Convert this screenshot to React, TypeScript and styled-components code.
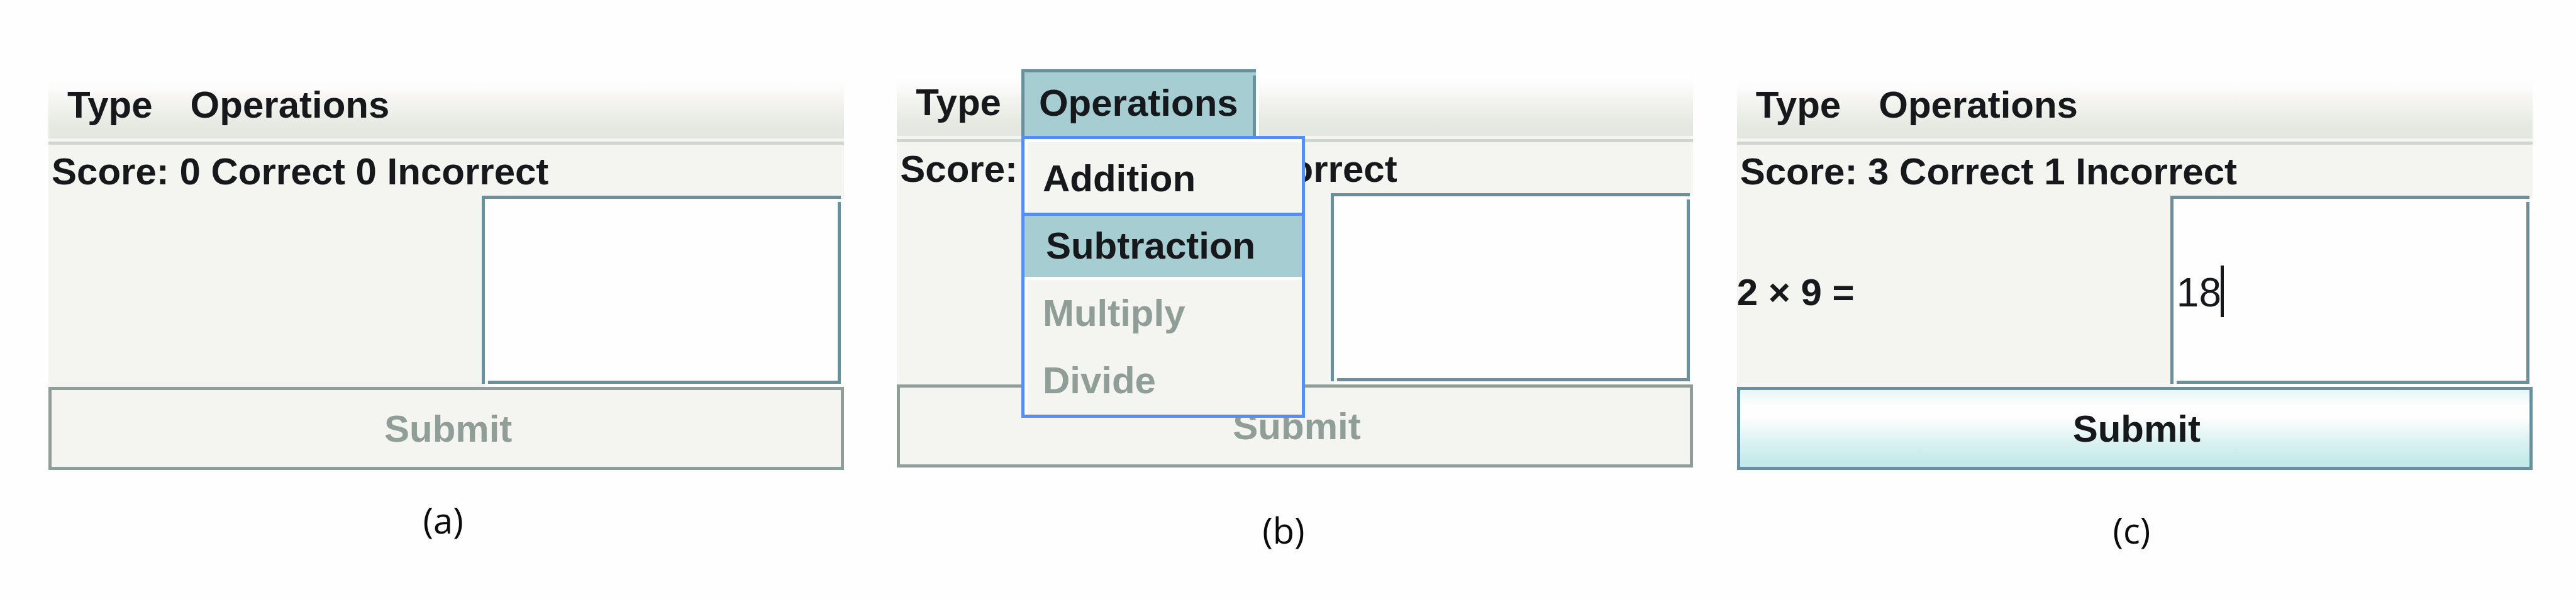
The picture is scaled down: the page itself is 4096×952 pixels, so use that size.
import React from "react";
import styled, { createGlobalStyle, css } from "styled-components";

const ink = "#17181c";
const panel = "#f4f4f0";
const paper = "#fefefe";
const steel = "#6a909e";
const teal = "#a5cdd2";
const muted = "#8f9e98";
const blue = "#568ef3";
const sans = `"Liberation Sans", Arial, sans-serif`;

const GlobalStyle = createGlobalStyle`
  *, *::before, *::after { box-sizing: border-box; }
  body { margin: 0; background: ${paper}; color: ${ink}; }
  button, input { font: inherit; color: inherit; margin: 0; border: 0; border-radius: 0; }
`;

const Page = styled.main`
  display: flex;
  align-items: flex-start;
  padding: 110px 69px 72px 77px;
`;

const Figure = styled.figure<{ $top?: number; $after?: number }>`
  flex: 1;
  min-width: 0;
  margin: 0 ${(p) => p.$after ?? 0}px 0 0;
  padding-top: ${(p) => p.$top ?? 0}px;
`;

const Caption = styled.figcaption<{ $gap: number; $inset: number }>`
  padding: ${(p) => p.$gap}px ${(p) => p.$inset}px 0 0;
  font: 56px/60px "Open Sans", "Noto Sans", sans-serif;
  color: #0a0a0a;
  text-align: center;
`;

const Applet = styled.form`
  display: flex;
  flex-direction: column;
  background: ${panel};
  font: bold 60px/70px ${sans};
`;

const MenuBar = styled.nav`
  display: flex;
  gap: 4px;
  height: 116px;
  padding: 0 0 5px 2px;
  border-bottom: 5px solid #cfd6cd;
  background: linear-gradient(
    #fefefe 12px,
    #fbfafa 30px,
    #f4f4f0 45px,
    #e4e8e0 92px,
    #e4e8e0 106px,
    ${panel} 106px
  );
`;

const MenuSlot = styled.div`
  position: relative;
  display: flex;
`;

const MenuButton = styled.button<{ $open?: boolean }>`
  padding: 0 28px;
  background: none;
  ${(p) =>
    p.$open &&
    css`
      padding: 0 28px 3px 23px;
      border-top: 5px solid ${steel};
      border-left: 5px solid ${steel};
      background: linear-gradient(${steel}, ${steel}) right 0 top 5px / 5px 100%
        no-repeat ${teal};
      box-shadow: 5px 0 0 ${paper};
    `}
`;

const Popup = styled.div`
  position: absolute;
  z-index: 1;
  top: 100%;
  left: 0;
  width: 451px;
  padding-top: 10px;
  border: 5px solid ${blue};
  background: ${panel};
  box-shadow: inset 5px 5px 0 ${paper};
`;

const PopupItem = styled.button<{ $selected?: boolean }>`
  display: block;
  width: 100%;
  height: 107px;
  padding: 0 29px 2px;
  background: none;
  text-align: left;
  &:disabled {
    color: ${muted};
  }
  ${(p) =>
    p.$selected &&
    css`
      padding: 0 34px 2px;
      border-top: 5px solid ${blue};
      border-bottom: 5px solid ${paper};
      background: ${teal};
    `}
`;

const Score = styled.p`
  margin: 0;
  padding: 8px 5px 3px;
`;

const Question = styled.div`
  display: grid;
  grid-template-columns: 689fr 576fr;
  height: 304px;
`;

const Expression = styled.label`
  align-self: center;
  padding-top: 4px;
`;

const AnswerBox = styled.div`
  position: relative;
  display: flex;
  align-items: center;
`;

const line = `linear-gradient(${steel}, ${steel})`;
const notch = `linear-gradient(${panel}, ${panel})`;

/* An etched field: the sides stop short of the top-right and bottom-left corners. */
const Answer = styled.input`
  width: 100%;
  height: 100%;
  padding: 4px 10px 0 10px;
  outline: 0;
  font: 64px/70px ${sans};
  background: ${line} left 0 top 0 / calc(100% - 5px) 5px no-repeat,
    ${line} left 0 top 0 / 5px calc(100% - 5px) no-repeat,
    ${line} right 5px top 10px / 5px calc(100% - 15px) no-repeat,
    ${line} left 10px bottom 5px / calc(100% - 15px) 5px no-repeat,
    ${notch} right 0 top 0 / 5px 5px no-repeat,
    ${notch} right 5px top 5px / 5px 5px no-repeat,
    ${notch} left 5px bottom 5px / 5px 5px no-repeat,
    ${notch} left 0 bottom 0 / 5px 5px no-repeat, ${paper};
`;

const Caret = styled.span`
  position: absolute;
  left: 80px;
  top: 111px;
  width: 5px;
  height: 82px;
  background: ${ink};
`;

const Submit = styled.button`
  height: 132px;
  padding: 2px 0 0 6px;
  border: 5px solid ${steel};
  background: linear-gradient(
    #e4f6f5,
    ${paper} 20%,
    ${paper} 36%,
    #ddf3f2 64%,
    #bfe8e8
  );
  &:disabled {
    border-color: ${muted};
    background: ${panel};
    color: ${muted};
  }
`;

type QuizProps = {
  id: string;
  correct: number;
  incorrect: number;
  expression?: string;
  answer?: string;
  menuOpen?: boolean;
};

function Quiz({ id, correct, incorrect, expression, answer = "", menuOpen }: QuizProps) {
  return (
    <Applet onSubmit={(e) => e.preventDefault()}>
      <MenuBar>
        <MenuSlot>
          <MenuButton type="button">Type</MenuButton>
        </MenuSlot>
        <MenuSlot>
          <MenuButton type="button" $open={menuOpen} aria-expanded={!!menuOpen}>
            Operations
          </MenuButton>
          {menuOpen && (
            <Popup role="menu">
              <PopupItem type="button" role="menuitem">Addition</PopupItem>
              <PopupItem type="button" role="menuitem" $selected>Subtraction</PopupItem>
              <PopupItem type="button" role="menuitem" disabled>Multiply</PopupItem>
              <PopupItem type="button" role="menuitem" disabled>Divide</PopupItem>
            </Popup>
          )}
        </MenuSlot>
      </MenuBar>
      <Score>
        Score: {correct} Correct {incorrect} Incorrect
      </Score>
      <Question>
        <Expression htmlFor={id}>{expression}</Expression>
        <AnswerBox>
          <Answer id={id} type="text" aria-label="Answer" autoComplete="off" defaultValue={answer} />
          {answer && <Caret />}
        </AnswerBox>
      </Question>
      <Submit type="submit" disabled={!answer}>
        Submit
      </Submit>
    </Applet>
  );
}

export default function App() {
  return (
    <>
      <GlobalStyle />
      <Page>
        <Figure $top={4} $after={84}>
          <Quiz id="answer-a" correct={0} incorrect={0} />
          <Caption $gap={49} $inset={10}>(a)</Caption>
        </Figure>
        <Figure $after={70}>
          <Quiz id="answer-b" correct={0} incorrect={0} menuOpen />
          <Caption $gap={69} $inset={36}>(b)</Caption>
        </Figure>
        <Figure $top={4}>
          <Quiz id="answer-c" correct={3} incorrect={1} expression="2 × 9 =" answer="18" />
          <Caption $gap={65} $inset={10}>(c)</Caption>
        </Figure>
      </Page>
    </>
  );
}
